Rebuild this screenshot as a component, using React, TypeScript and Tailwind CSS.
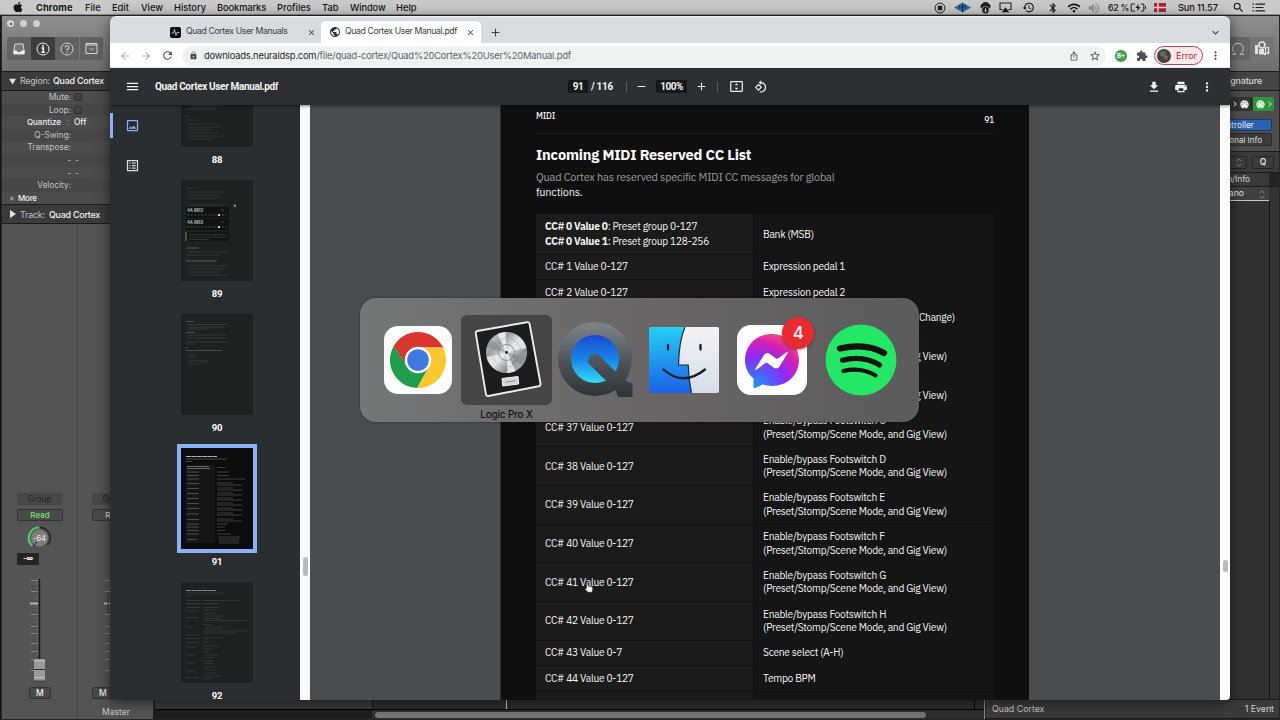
import type { ReactNode } from "react";
import { FaApple } from "react-icons/fa";
import {
  MdAdd, MdArrowBack, MdArrowForward, MdBluetooth, MdClose, MdExtension, MdFileDownload, MdHistory,
  MdIosShare, MdKeyboardArrowDown, MdLock, MdMenu, MdMoreVert, MdOutlineImage, MdOutlineListAlt,
  MdPrint, MdPublic, MdRefresh, MdRemove, MdSearch, MdStarBorder, MdVolumeUp, MdWifi,
} from "react-icons/md";

/* ---------- menu bar ---------- */

const menus = [
  { label: "Chrome", cls: "w-[49px] font-bold tracking-[0.1px]" },
  { label: "File", cls: "w-[27px]" },
  { label: "Edit", cls: "w-[29px]" },
  { label: "View", cls: "w-[33px]" },
  { label: "History", cls: "w-[43px]" },
  { label: "Bookmarks", cls: "w-[60px] tracking-[-0.1px]" },
  { label: "Profiles", cls: "w-[45px]" },
  { label: "Tab", cls: "w-[28px]" },
  { label: "Window", cls: "w-[46px] tracking-[-0.1px]" },
  { label: "Help", cls: "w-[30px]" },
];

function MenuBar() {
  return (
    <header className="flex h-[15px] shrink-0 items-center border-b border-[#8c8c8c] bg-[#c9c9c9] pt-[1px] text-[9.3px] font-medium text-[#151515]">
      <FaApple className="ml-[12px] mr-[12px] mb-[1px] size-[12px] shrink-0" />
      {menus.map((m) => (
        <span key={m.label} className={`shrink-0 whitespace-nowrap ${m.cls}`}>{m.label}</span>
      ))}
      <div className="ml-auto flex items-center">
        <svg className="mr-[8px] size-[12px]" viewBox="0 0 12 12">
          <circle cx="6" cy="6" r="5" fill="none" stroke="#222" strokeWidth="1" />
          <rect x="3.7" y="3.7" width="4.6" height="4.6" fill="#222" />
        </svg>
        <svg className="mr-[8px] h-[11px] w-[17px]" viewBox="0 0 17 11">
          <path d="M0 5.5 8.500 .5 17 5.500 8.500 10.500z" fill="#2b6da8" />
          <path d="M5.800 3v3.500M8.500 1.500v8M11.200 3v3.500M7 5h3" stroke="#12263a" strokeWidth="1" fill="none" />
        </svg>
        <svg className="mr-[7px] h-[12px] w-[13px]" viewBox="0 0 13 12">
          <path d="M3 6.500a2.400 2.400 0 0 1 0-4.500 3.800 3.200 0 0 1 7 0A2.400 2.400 0 0 1 10 6.500z" fill="#1c1c1c" />
          <circle cx="6.500" cy="8" r="3.700" fill="#1c1c1c" stroke="#c9c9c9" strokeWidth=".6" />
          <path d="M6.500 6v3.600M5 8.200l1.500 1.600L8 8.200" stroke="#c9c9c9" fill="none" strokeWidth=".9" />
        </svg>
        <svg className="mr-[10px] h-[11px] w-[13px]" viewBox="0 0 13 11">
          <path d="M3.500 7.500H1v-6.500h11v6.500H9.500" fill="none" stroke="#222" strokeWidth="1.100" />
          <path d="M6.500 5.300 10.300 10.300H2.700z" fill="#1c1c1c" />
        </svg>
        <MdHistory className="mr-[12px] size-[13px]" />
        <MdBluetooth className="mr-[8px] size-[12px]" />
        <MdWifi className="mr-[6px] size-[14px]" />
        <MdVolumeUp className="mr-[7px] size-[14px] text-[#8f8f8f]" />
        <span className="w-[22px] whitespace-nowrap text-[8.800px] tracking-[-0.3px]">62 %</span>
        <svg className="mr-[7px] h-[9px] w-[17px]" viewBox="0 0 17 9">
          <path d="M5 1H1.200v7H5M11 1h2.800v7H11" fill="none" stroke="#222" strokeWidth="1" />
          <path d="M8.800 .8 5.500 5h2.300l-.6 3.300L10.500 4H8.200z" fill="#111" />
          <path d="M15.500 3v3" stroke="#222" />
        </svg>
        <svg className="mr-[12px] h-[9px] w-[12px]" viewBox="0 0 12 9">
          <path d="M0 0h12v9H0z" fill="#b3202c" />
          <path d="M4 0v9M0 4.500h12" stroke="#e9e0e0" strokeWidth="1.400" />
        </svg>
        <span className="w-[54px] whitespace-nowrap tracking-[-0.15px]">Sun 11.57</span>
        <MdSearch className="mr-[7px] size-[13px]" />
        <svg className="mr-[15px] h-[9px] w-[13px]" viewBox="0 0 13 9">
          <path d="M3.500 1.200H13M3.500 4.500H11.500M3.500 7.800H13M.5 1.200H2M.5 4.500H2M.5 7.800H2" stroke="#1c1c1c" strokeWidth="1.200" />
        </svg>
      </div>
    </header>
  );
}

/* ---------- Logic window behind the browser ---------- */

function InspectorRow({ label, children, strong }: { label: string; children?: ReactNode; strong?: boolean }) {
  return (
    <div className="flex h-[12.6px] items-center odd:bg-[#4c4c4c] even:bg-[#474747]">
      <span className={`w-[69px] shrink-0 text-right ${strong ? "pr-[10px] text-[8px] font-medium text-[#eee]" : ""}`}>{label}</span>
      {children}
    </div>
  );
}

function Ticks({ handle }: { handle?: boolean }) {
  return (
    <svg className="h-[104px] w-[16px]" viewBox="0 0 16 104">
      <path d="M1 1.500h7M1 12.500h7M1 35.500h7M1 47.500h7M1 54.500h7M1 64.500h7M1 72.500h7M1 80.500h7M1 91.500h7" stroke="#858585" />
      <path d="M4 5h4M4 9h4M4 17h4M4 20h4M4 28h4M4 31h4M4 39h4M4 43h4M5 51h3M5 58h3M5 61h3M5 68h3M5 76h3" stroke="#676767" />
      <path d="M0 24.500h8" stroke="#b5b5b5" strokeWidth="2" />
      {handle ? (
        <>
          <path d="M9.500 0v82" stroke="#1a1a1a" strokeWidth="1.500" />
          <rect x="4" y="80" width="11" height="22" rx="1" fill="#9a9a9a" />
          <path d="M4 82h11M4 98.500h11" stroke="#c2c2c2" />
          <path d="M4 90.500h11" stroke="#333" />
          <path d="M4 102h11" stroke="#3c3c3c" />
        </>
      ) : (
        <path d="M4 14v20" stroke="#333" />
      )}
    </svg>
  );
}

function Strip() {
  return (
    <div className="flex w-[76px] shrink-0 flex-col border-r border-[#434343] pl-[15px] pt-[269px]">
      <div className="flex h-[12px] w-[45px] items-center justify-center bg-[#484848] text-[8.300px] text-[#222]">Group</div>
      <div className="mt-[4px] flex h-[12px] w-[46px] items-center justify-center rounded-[2px] border border-[#333] bg-[#494949] text-[8px] font-medium text-[#6be07d]">Read</div>
      <svg className="ml-[10px] mt-[4px] size-[26px]" viewBox="0 0 26 26">
        <circle cx="12.500" cy="13" r="8.500" fill="#7d7d7d" />
        <path d="M5.200 20.700A10.500 10.500 0 0 1 12.500 2.500" fill="none" stroke="#4fc968" strokeWidth="2.200" />
        <path d="M12.500 2.500A10.500 10.500 0 0 1 20.500 20" fill="none" stroke="#2c2c2c" strokeWidth="1.800" />
        <path d="M9.500 17 7 21" stroke="#222" />
        <text x="12.500" y="15.500" textAnchor="middle" fontSize="7.500" fill="#f1f1f1">-64</text>
      </svg>
      <div className="mt-[2px] flex h-[12px] w-[22px] items-center justify-center bg-[#242424] text-[7px] font-bold text-white">-∞</div>
      <div className="ml-[13px] mt-[14px] h-[104px]"><Ticks handle /></div>
      <div className="ml-[12px] mt-[4px] flex h-[12px] w-[22px] items-center justify-center rounded-[2px] border border-[#333] bg-[#494949] text-[8.500px] font-medium text-[#eee]">M</div>
    </div>
  );
}

function MasterStrip() {
  return (
    <div className="flex w-[76px] shrink-0 flex-col pl-[14px] pt-[269px]">
      <div className="flex h-[12px] w-[45px] items-center justify-center bg-[#484848] text-[8.300px] text-[#222]">Group</div>
      <div className="mt-[4px] flex h-[12px] w-[46px] items-center justify-center rounded-[2px] border border-[#333] bg-[#494949] text-[8px] font-medium text-[#ddd]">Read</div>
      <div className="ml-[12px] mt-[58px] h-[104px]"><Ticks /></div>
      <div className="mt-[4px] flex h-[12px] w-[22px] items-center justify-center rounded-[2px] border border-[#333] bg-[#494949] text-[8.500px] font-medium text-[#eee]">M</div>
      <div className="ml-[-14px] mt-[7px] text-center text-[8.500px] leading-[12px] text-[#c9c9c9]">Master</div>
    </div>
  );
}

function Stepper() {
  return (
    <svg className="h-[9px] w-[6px]" viewBox="0 0 6 9">
      <path d="M.7 3.200 3 .8l2.300 2.400M.7 5.800 3 8.200l2.300-2.400" fill="none" stroke="#8b8b8b" strokeWidth=".9" />
    </svg>
  );
}

function MidiPort({ tint, hole }: { tint: string; hole: string }) {
  return (
    <svg className="size-[9px]" viewBox="0 0 9 9">
      <circle cx="4.500" cy="4.500" r="4.200" fill={tint} />
      <g fill={hole}>
        <circle cx="2" cy="4.800" r=".5" /><circle cx="7" cy="4.800" r=".5" /><circle cx="2.800" cy="2.800" r=".5" />
        <circle cx="6.200" cy="2.800" r=".5" /><circle cx="4.500" cy="2" r=".5" /><path d="M3.600 7.500h1.800v1.500H3.600z" />
      </g>
    </svg>
  );
}

function Chevron() {
  return (
    <svg className="h-[6px] w-[4px]" viewBox="0 0 4 6"><path d="M.7.7 3.200 3 .7 5.300" fill="none" stroke="#f1f1f1" /></svg>
  );
}

function LogicWindow() {
  return (
    <section className="ml-[1px] flex h-[705px] flex-col border border-[#262626] bg-[#4f4f4f] text-[8.300px] text-[#c2c2c2]">
      <div className="flex h-[55px] shrink-0 justify-between bg-linear-to-b from-[#8f8f8f] to-[#6d6d6d] pl-[5px] pr-[5px]">
        <div>
          <div className="mt-[4px] flex gap-[6px]">
            <i className="flex size-[7px] items-center justify-center rounded-full bg-[#d5d5d5]"><i className="size-[2px] rounded-full bg-[#333]" /></i>
            <i className="size-[7px] rounded-full bg-[#cfcfcf]" />
            <i className="size-[7px] rounded-full bg-[#cfcfcf]" />
          </div>
          <div className="mt-[10px] flex h-[23px] w-[96px] items-center rounded-[3px] bg-[#626262] text-[#d3d3d3]">
            <div className="flex h-full w-[24px] items-center justify-center">
              <svg className="size-[14px]" viewBox="0 0 14 14"><path d="M3 2h8l1 6v4H2V8z" fill="#777" stroke="#ddd" /><path d="M1.500 8.500h3l1 1.500h3l1-1.500h3V12h-11z" fill="#eee" /></svg>
            </div>
            <div className="flex h-full w-[24px] items-center justify-center bg-[#3d3d3d]">
              <svg className="size-[14px]" viewBox="0 0 14 14"><circle cx="7" cy="7" r="6" fill="none" stroke="#f1f1f1" /><path d="M5.500 6h1.800v4M5.300 10.200h3.600M7 3v1.700" stroke="#f6f6f6" strokeWidth="1.600" fill="none" /></svg>
            </div>
            <div className="flex h-full w-[24px] items-center justify-center">
              <svg className="size-[14px]" viewBox="0 0 14 14"><circle cx="7" cy="7" r="6" fill="none" stroke="#d0d0d0" /><path d="M5.200 5.500C5.200 3.200 8.900 3.300 8.900 5.400 8.900 6.800 7 6.800 7 8.500M7 9.700v1.200" stroke="#d0d0d0" strokeWidth="1.100" fill="none" /></svg>
            </div>
            <div className="flex h-full w-[24px] items-center justify-center border-l border-[#777]">
              <svg className="size-[13px]" viewBox="0 0 13 13"><path d="M1 1.500h11v10H1zM1 3h11" fill="none" stroke="#d8d8d8" /><path d="M4.500 6.200l2 2 2-2" fill="none" stroke="#d8d8d8" /></svg>
            </div>
          </div>
        </div>
        <div className="mt-[21px] flex h-[23px] w-[60px] items-center justify-end rounded-[3px] bg-[#666] text-[#c9c9c9]">
          <svg className="mr-[5px] size-[14px]" viewBox="0 0 14 14"><path d="M1 12.300h4C2.500 10.500 1.700 8.500 1.700 6.500a5.300 5.300 0 0 1 10.600 0c0 2-.8 4-3.300 5.800h4" fill="none" stroke="#c9c9c9" /></svg>
          <div className="flex h-full w-[24px] items-center justify-center bg-[#747474]">
            <svg className="size-[16px]" viewBox="0 0 16 16"><path d="M1 4h3v9H1zM5 8h5v5.500H5z" fill="#e3e3e3" /><circle cx="8" cy="4" r="3" fill="none" stroke="#e3e3e3" strokeWidth="1.600" /><path d="M11.500 13V7l3-.5v5.500" stroke="#e3e3e3" strokeWidth="1.200" fill="none" /><circle cx="11" cy="13" r="1.300" fill="#e3e3e3" /><circle cx="14" cy="12" r="1.300" fill="#e3e3e3" /></svg>
          </div>
        </div>
      </div>

      <div className="flex min-h-0 flex-1">
        {/* inspector + channel strips */}
        <div className="flex w-[153px] shrink-0 flex-col border-r-2 border-[#222]">
          <div className="flex h-[20px] shrink-0 items-center border-y border-[#1b1b1b] bg-[#3b3b3b] pl-[7px] text-[8.900px] tracking-[-0.22px]">
            <svg className="mr-[4px] size-[7px]" viewBox="0 0 7 7"><path d="M0 .8h7L3.500 6.500z" fill="#e2e2e2" /></svg>
            <span className="w-[33px]">Region:</span><span className="whitespace-nowrap font-medium text-[#f4f4f4]">Quad Cortex</span>
          </div>
          <div>
            <InspectorRow label="Mute:"><i className="ml-[3px] size-[8px] rounded-[2px] border border-[#303030] bg-[#424242]" /></InspectorRow>
            <InspectorRow label="Loop:"><i className="ml-[3px] size-[8px] rounded-[2px] border border-[#303030] bg-[#424242]" /></InspectorRow>
            <InspectorRow label="Quantize" strong><span className="ml-[-6px] mr-[3px] scale-75"><Stepper /></span><span className="font-medium text-[#f1f1f1]">Off</span></InspectorRow>
            <InspectorRow label="Q-Swing:" />
            <InspectorRow label="Transpose:" />
            <InspectorRow label="-"><span className="ml-[4px]">-</span></InspectorRow>
            <InspectorRow label="-"><span className="ml-[4px]">-</span></InspectorRow>
            <InspectorRow label="Velocity:" />
            <div className="flex h-[12.6px] items-center bg-[#4c4c4c] pl-[8px] text-[8px] font-medium tracking-[-0.25px] text-[#f1f1f1]">
              <svg className="mr-[3px] size-[5px]" viewBox="0 0 5 5"><path d="M.5 0v5L4.500 2.500z" fill="#999" /></svg>More
            </div>
          </div>
          <div className="flex h-[20px] shrink-0 items-center border-y border-[#1b1b1b] bg-[#3b3b3b] pl-[8px] text-[8.900px] tracking-[-0.22px]">
            <svg className="mr-[4px] h-[8px] w-[6px]" viewBox="0 0 6 8"><path d="M0 0v8l6-4z" fill="#e2e2e2" /></svg>
            <span className="w-[29px]">Track:</span><span className="whitespace-nowrap font-medium text-[#f4f4f4]">Quad Cortex</span>
          </div>
          <div className="flex min-h-0 flex-1 overflow-hidden bg-[#545454]"><Strip /><MasterStrip /></div>
        </div>

        {/* arrange area: only its foot shows under the browser */}
        <div className="flex w-[830px] shrink-0 flex-col justify-end border-r border-[#8a8a8a] bg-[#2e2e2e]">
          <div className="flex h-[10px] border-b border-black">
            <div className="w-[218px] border-r border-[#111] bg-[#3a3a3a]" />
            <div className="w-[134px] border-r border-[#c9c9c9]" />
            <div className="w-[468px] border-r border-black" />
          </div>
          <div className="flex h-[9px] items-center">
            <div className="h-full w-[217px] bg-[#1f1f1f]" />
            <div className="ml-[3px] h-[6px] w-[551px] rounded-full bg-[#757575]" />
          </div>
        </div>

        {/* event list */}
        <div className="flex min-w-0 flex-1 flex-col border-l border-[#222] bg-[#333]">
          <div className="flex h-[20px] shrink-0 items-center justify-end border-y border-[#1b1b1b] bg-[#454545] pr-[17px] text-[8.800px] font-medium tracking-[-0.1px] text-[#dcdcdc]">Signature</div>
          <div className="flex h-[61px] shrink-0 flex-col items-end border-b border-[#1c1c1c] bg-[#4d4d4d] pr-[5px] pt-[6px]">
            <div className="flex h-[14px]">
              <span className="flex w-[24px] items-center justify-center gap-[3px] rounded-l-[2px] bg-[#333]"><Chevron /><MidiPort tint="#eeeeee" hole="#333333" /></span>
              <span className="flex w-[21px] items-center justify-center gap-[3px] rounded-r-[2px] bg-[#2f9440]"><MidiPort tint="#d8f5dc" hole="#2f9440" /><Chevron /></span>
            </div>
            <div className="mt-[8px] flex flex-col gap-[2px] pr-[2px]">
              <div className="flex h-[12px] w-[60px] items-center justify-end rounded-[2px] border border-[#1c3a63] bg-[#2b62ad] pr-[17px] text-[#e4ecf6]">Controller</div>
              <div className="flex h-[13px] w-[60px] items-center justify-end whitespace-nowrap rounded-[2px] border border-[#2a2a2a] bg-[#3c3c3c] pr-[9px] text-[8px] text-[#e0e0e0]">Additional Info</div>
            </div>
          </div>
          <div className="flex h-[20px] shrink-0 items-center justify-end gap-[5px] bg-[#3b3b3b] pr-[5px] pt-[1px]">
            <span className="flex h-[13px] w-[40px] items-center justify-end rounded-[2px] border border-[#242424] pr-[4px]"><Stepper /></span>
            <span className="flex h-[13px] w-[22px] items-center justify-center rounded-[2px] border border-[#242424] text-[8.500px] font-medium text-[#eee]">Q</span>
          </div>
          <div className="flex h-[15px] shrink-0 items-center border-y border-[#1c1c1c] bg-[#242424] pr-[10px]"><div className="flex h-full flex-1 items-center justify-end bg-[#3a3a3a] pr-[19px] text-[#dcdcdc]">Length/Info</div></div>
          <div className="mr-[10px] flex h-[14px] shrink-0 items-center justify-end border-b border-[#c9c9c9] bg-[#404040] pr-[4px] pt-[1px] text-[8.700px] text-[#e6e6e6]">Grand Piano<span className="ml-[15px]"><Stepper /></span></div>
          <div className="mr-[9px] flex-1 border-r border-[#151515] bg-[#313131]" />
          <div className="flex h-[20px] shrink-0 items-center justify-between border-y border-[#161616] bg-[#3a3a3a] pl-[6px] pr-[5px] text-[8.800px]">
            <span>Quad Cortex</span><span className="text-[#d5d5d5]">1 Event</span>
          </div>
        </div>
      </div>
    </section>
  );
}

/* ---------- browser chrome ---------- */

function TabStrip() {
  return (
    <div className="flex h-[27px] shrink-0 items-end rounded-t-[6px] border-t border-[#eef0f2] bg-[#d8dce0] text-[8.700px] tracking-[-0.38px] text-[#3c4043]">
      <div className="ml-[60px] flex h-[22px] w-[151px] items-center">
        <span className="flex size-[11px] shrink-0 items-center justify-center rounded-[2px] bg-[#0c0c0c]">
          <svg className="size-[9px]" viewBox="0 0 9 9"><path d="M.5 5h2l1-3.500 1.500 6 1-3H8.500" fill="none" stroke="#ddd" strokeWidth=".8" /></svg>
        </span>
        <span className="ml-[5px] flex-1 whitespace-nowrap">Quad Cortex User Manuals</span>
        <MdClose className="mr-[5px] size-[9px] shrink-0" />
      </div>
      <div className="flex h-[22px] w-[160px] items-center rounded-t-[5px] bg-white">
        <MdPublic className="ml-[8px] size-[12px] shrink-0 text-[#333]" />
        <span className="ml-[4px] flex-1 whitespace-nowrap">Quad Cortex User Manual.pdf</span>
        <MdClose className="mr-[6px] size-[9px] shrink-0" />
      </div>
      <MdAdd className="mb-[4px] ml-[8px] size-[13px]" />
      <MdKeyboardArrowDown className="mb-[4px] ml-auto mr-[8px] size-[13px]" />
    </div>
  );
}

function AddressBar() {
  return (
    <div className="flex h-[25px] shrink-0 items-center bg-white text-[#4a4d51]">
      <MdArrowBack className="ml-[9px] size-[12px] text-[#a9abae]" />
      <MdArrowForward className="ml-[9px] size-[12px] text-[#a9abae]" />
      <MdRefresh className="ml-[9px] size-[13px]" />
      <div className="ml-[8px] flex h-[20px] w-[924px] items-center rounded-full bg-[#eff2f3] pl-[7px] pr-[5px]">
        <MdLock className="size-[9px]" />
        <span className="ml-[6px] whitespace-nowrap pt-[1px] text-[9.400px] tracking-[-0.2px] text-[#5f6368]">
          <span className="text-[#26282b]">downloads.neuraldsp.com</span>/file/quad-cortex/Quad%20Cortex%20User%20Manual.pdf
        </span>
        <MdIosShare className="ml-auto size-[10px]" />
        <MdStarBorder className="ml-[10px] size-[12px]" />
      </div>
      <span className="ml-[9px] flex size-[12px] items-center justify-center rounded-full bg-[#3fa14b] text-[6px] font-bold text-white ring-2 ring-[#f1f1f1]">B+</span>
      <MdExtension className="ml-[9px] size-[12px]" />
      <div className="ml-[6px] flex h-[19px] w-[49px] items-center rounded-full border border-[#b0485a] bg-[#fbe9ea] pl-[2px] text-[9px] text-[#a8303f]">
        <svg className="mr-[5px] size-[14px]" viewBox="0 0 14 14"><circle cx="7" cy="7" r="7" fill="#3d4439" /><circle cx="6" cy="5" r="3" fill="#5f6b57" /><path d="M8 6l3 1-1 4-3-1z" fill="#a4566a" /></svg>
        Error
      </div>
      <MdMoreVert className="ml-[6px] size-[13px]" />
    </div>
  );
}

function PdfToolbar() {
  return (
    <div className="z-10 flex h-[37px] shrink-0 items-center bg-[#2c3032] font-['Roboto',sans-serif] text-[10px] font-bold text-[#f3f3f3] shadow-[0_1px_3px_rgba(0,0,0,.5)]">
      <MdMenu className="ml-[15px] size-[15px]" />
      <span className="ml-[15px] w-[413px] whitespace-nowrap text-[10px] tracking-[-0.36px]">Quad Cortex User Manual.pdf</span>
      <span className="w-[20px] bg-[#16191a] text-center leading-[13px] tracking-[-0.4px]">91</span>
      <span className="ml-[3px] w-[35px] tracking-[-0.3px]">/ 116</span>
      <i className="h-[10px] w-px bg-[#5d6062]" />
      <MdRemove className="ml-[8px] size-[13px]" />
      <span className="ml-[8px] w-[31px] bg-[#16191a] text-center leading-[13px] tracking-[-0.5px]">100%</span>
      <MdAdd className="ml-[8px] size-[13px]" />
      <i className="ml-[9px] h-[10px] w-px bg-[#5d6062]" />
      <svg className="ml-[12px] h-[11px] w-[13px]" viewBox="0 0 13 11">
        <rect x=".7" y=".7" width="11.600" height="9.600" rx=".8" fill="none" stroke="#f3f3f3" strokeWidth="1.200" />
        <path d="M6.500 2.200 8.300 4.300H4.700zM6.500 8.800 8.300 6.700H4.700z" fill="#f3f3f3" />
      </svg>
      <svg className="ml-[11px] size-[14px]" viewBox="0 0 14 14">
        <path d="M4.500 4.500 7.300 7.300 4.500 10.100 1.700 7.300z" fill="none" stroke="#f3f3f3" strokeWidth="1.100" />
        <path d="M6.500 2.600a4.700 4.700 0 1 1-.6 9.300" fill="none" stroke="#f3f3f3" strokeWidth="1.200" />
        <path d="M7.300 .2v4.800L4.700 2.600z" fill="#f3f3f3" />
      </svg>
      <MdFileDownload className="ml-auto mr-[13px] size-[14px]" />
      <MdPrint className="mr-[12px] size-[14px]" />
      <MdMoreVert className="mr-[16px] size-[14px]" />
    </div>
  );
}

/* ---------- thumbnails ---------- */

const art: Record<number, ReactNode> = {
  88: (
    <path d="M5 54h7M7 57h30M7 60h34M7 63h28M5 70h2M5 74h12M7 78h30M7 81h34M7 84h24M7 87h30M7 90h36M7 93h25" stroke="#3c4041" strokeWidth=".7" />
  ),
  89: (
    <>
      <path d="M5 8h7M7 12h36M7 15h30M7 18h32M5 22h1M7 25h35M7 72h40M5 75h34M5 79h1M7 86h40M7 89h36M7 92h32M7 95h40" stroke="#3c4041" strokeWidth=".7" />
      <path d="M5 68h13M5 81h31" stroke="#666a6b" strokeWidth=".8" />
      <path d="M5 27h43v11H5zM5 39h43v11H5z" fill="#101213" />
      <path d="M5 52h43v9H5z" fill="#141516" />
      <path d="M5 52v9" stroke="#6b5a34" strokeWidth="1.500" />
      <path d="M8 54.500h36M8 57h38M8 59.500h20" stroke="#464646" strokeWidth=".6" />
      <g fill="#9fb5a5" fontSize="4.200" fontWeight="700"><text x="6" y="32">4A MIDI</text><text x="6" y="43.500">4A MIDI</text></g>
      <path d="M6 35h40M6 47h40" stroke="#5b5b5b" strokeWidth=".8" strokeDasharray="2 1.500" />
      <path d="M37 34h2v2h-2zM37 46h2v2h-2z" fill="#bcd3dd" />
      <path d="M40 30h3M40 42h3" stroke="#7d5a42" strokeWidth=".8" />
      <path d="M53 24.500l1 2.500 1-1z" fill="#bbb" stroke="#bbb" strokeWidth=".5" />
    </>
  ),
  90: (
    <>
      <path d="M7 10.500h40M7 13h37M7 15h21M7 21h38M7 24h37M5 28h43M5 30h9M7 41h9M7 44h8M7 47h20M7 50h14" stroke="#404445" strokeWidth=".7" />
      <path d="M5 7.500h8M5 18.500h9M5 34h2M5 36.500h36" stroke="#5d6162" strokeWidth=".7" />
    </>
  ),
  91: (
    <>
      <path d="M5 17h29v78H5z" fill="#161616" />
      <path d="M5 8.500h31" stroke="#b5b5b5" strokeWidth="1.200" strokeDasharray="5 .4" />
      <path d="M5 11h41M5 13.500h6" stroke="#5f5f5f" strokeWidth=".7" />
      <path d="M6 18.500h22M6 20.500h23" stroke="#7d7d7d" strokeWidth=".8" />
      <path d="M6 24h12M6 27.500h12M6 31h12M6 35.500h12M6 40.500h12M6 45.500h12M6 50.500h12M6 55.500h12M6 60.500h12M6 66h12M6 71.500h12M6 76h12M6 79h12M6 82.500h12M6 86h12M6 91.500h10" stroke="#5c5c5c" strokeWidth=".8" />
      <path d="M36 19.500h8M36 24h12M36 27.500h12M36 31h28M36 35h16M36 37h25M36 40h16M36 42h25M36 45h16M36 47h25M36 50h16M36 52h25M36 55h16M36 57h25M36 60h16M36 62h25M36 65h16M36 67h25M36 71h16M36 73h25M36 76h11M36 79h8M36 82.500h8M36 86h14M37 89h22M38 91h20M38 93h20M38 95h20" stroke="#565656" strokeWidth=".7" />
    </>
  ),
  92: (
    <>
      <path d="M5 8.500h30" stroke="#808384" strokeWidth="1" strokeDasharray="5 .4" />
      <path d="M5 11h38M5 13.500h6M5 18.500h15M5 21.500h13M5 25.500h14M5 29h13M5 35.500h12M5 45h6M5 53h13M5 56.500h13M5 60.500h13M5 65h10M5 73h10M5 81h10M5 89h10M5 95.500h12M22 18.500h36M22 21.500h16M22 25.500h15M22 28h12M22 31.500h12M24 34h19M24 36.500h16M22 38.500h44M22 42.500h8M24 45h20M24 47h17M22 49h44M22 51h34M22 56h20M22 60.500h6M22 64h16M22 67h8M22 70h6M24 73h13M24 75.500h10M22 79h11M24 81.500h9M22 85h13M24 88h12M24 91h12M22 94h18M22 96.500h10" stroke="#3c4041" strokeWidth=".7" />
    </>
  ),
};

function Thumb({ page, active }: { page: number; active?: boolean }) {
  return (
    <figure className="flex h-[134px] shrink-0 flex-col items-center">
      <svg
        className={`h-[101px] w-[72px] shrink-0 ${active ? "bg-[#0c0c0c] outline-4 outline-[#8ab0f5]" : "bg-[#1c2122]"}`}
        viewBox="0 0 72 101"
      >
        {art[page]}
      </svg>
      <figcaption className="mt-[6px] font-['Roboto',sans-serif] text-[9.500px] font-bold leading-[14px] tracking-[-0.2px] text-white">{page}</figcaption>
    </figure>
  );
}

function Sidebar() {
  return (
    <div className="flex w-[200px] shrink-0">
      <div className="flex w-[190px] bg-[#2a2e30]">
        <div className="flex w-[45px] flex-col">
          <div className="mt-[8px] flex h-[25px] items-center border-l-[3px] border-[#8ab0f5] pl-[12px]">
            <MdOutlineImage className="size-[15px] text-[#8ab0f5]" />
          </div>
          <MdOutlineListAlt className="ml-[15px] mt-[20px] size-[15px] text-[#d9dcde]" />
        </div>
        <div className="flex w-[124px] flex-col overflow-hidden">
          <div className="-mt-[59px]">
            <Thumb page={88} />
            <Thumb page={89} />
            <Thumb page={90} />
            <Thumb page={91} active />
            <Thumb page={92} />
          </div>
        </div>
      </div>
      <div className="flex w-[10px] justify-center bg-[#fafafa] pt-[452px]">
        <i className="h-[19px] w-[5px] rounded-full bg-[#b9b9b9]" />
      </div>
    </div>
  );
}

/* ---------- document ---------- */

const footswitches = [35, 36, 37, 38, 39, 40, 41, 42].map((cc, i) => ({ cc, name: "ABCDEFGH"[i] }));

function Row({ left, right, tall }: { left: ReactNode; right: ReactNode; tall?: boolean }) {
  return (
    <div className={`flex items-center border-b border-[#121212] ${tall ? "h-[38.7px]" : "h-[25.6px]"}`}>
      <div className="flex h-full w-[218px] items-center border-r border-[#101010] bg-[#1b1b1b] pl-[9px]">{left}</div>
      <div className="flex h-full flex-1 items-center bg-[#151515] pl-[9px] leading-[13.400px]">{right}</div>
    </div>
  );
}

function Document() {
  return (
    <div className="flex min-w-0 flex-1 justify-center overflow-hidden bg-[#494d50]">
      <article className="ml-[-1px] h-[640px] w-[529px] shrink-0 border-l border-[#2b2d2e] bg-[#0f0f0f] px-[35px] font-['IBM_Plex_Sans','Roboto','Noto_Sans',sans-serif] text-[10.200px] tracking-[-0.25px] text-[#f4f4f4]">
        <div className="flex h-[29px] justify-between border-b border-[#1c1c1c] text-[8.600px] font-medium">
          <span className="mt-[5px]">MIDI</span>
          <span className="mt-[9px]">91</span>
        </div>
        <h1 className="mt-[11px] whitespace-nowrap text-[14.600px] font-bold leading-[20px] tracking-[-0.19px] text-white">Incoming MIDI Reserved CC List</h1>
        <p className="mt-[5px] whitespace-nowrap text-[10.900px] leading-[15px] tracking-[-0.18px] text-[#9d9d9d]">
          Quad Cortex has reserved specific MIDI CC messages for global
          <br />
          <span className="text-[#f4f4f4]">functions.</span>
        </p>
        <div className="mt-[14px] whitespace-nowrap">
          <div className="flex h-[40.500px] border-b border-[#121212]">
            <div className="flex w-[218px] flex-col justify-center border-r border-[#101010] bg-[#1b1b1b] pl-[9px] pt-[1px] leading-[15.300px]">
              <span><b>CC# 0 Value 0</b>: Preset group 0-127</span>
              <span><b>CC# 0 Value 1</b>: Preset group 128-256</span>
            </div>
            <div className="flex flex-1 items-center bg-[#151515] pl-[9px] pt-[1px]">Bank (MSB)</div>
          </div>
          <Row left="CC# 1 Value 0-127" right="Expression pedal 1" />
          <Row left="CC# 2 Value 0-127" right="Expression pedal 2" />
          <Row left="CC# 32 Value 0-127" right="Setlist select (applies after Program Change)" />
          {footswitches.map((f) => (
            <Row
              key={f.cc}
              tall
              left={`CC# ${f.cc} Value 0-127`}
              right={<span>Enable/bypass Footswitch {f.name}<br />(Preset/Stomp/Scene Mode, and Gig View)</span>}
            />
          ))}
          <Row left="CC# 43 Value 0-7" right="Scene select (A-H)" />
          <Row left="CC# 44 Value 0-127" right="Tempo BPM" />
          <Row left="CC# 45 Value 0-127" right="Tuner on/off" />
        </div>
      </article>
    </div>
  );
}

function BrowserWindow() {
  return (
    <section className="absolute left-[110px] top-[16px] flex h-[684px] w-[1120px] flex-col overflow-hidden rounded-t-[6px] rounded-br-[4px] shadow-[0_2px_14px_rgba(0,0,0,.55)]">
      <TabStrip />
      <AddressBar />
      <PdfToolbar />
      <div className="flex min-h-0 flex-1">
        <Sidebar />
        <Document />
        <div className="flex w-[10px] shrink-0 justify-center bg-[#fafafa] pt-[455px]">
          <i className="h-[12px] w-[5px] rounded-full bg-[#b9b9b9]" />
        </div>
      </div>
    </section>
  );
}

/* ---------- application switcher ---------- */

function ChromeIcon() {
  return (
    <svg className="h-[70px] w-[70px]" viewBox="0 0 70 70">
      <rect x="1" y="1" width="68" height="68" rx="14" fill="#fdfdfd" />
      <path d="M10.750 21A28 28 0 0 1 59.250 21L61 22.500H35L24 41.500z" fill="#d8362f" />
      <path d="M60 22.500A28 28 0 0 1 34 63L46 42 35 22.500z" fill="#fbc72f" />
      <path d="M10.750 21A28 28 0 0 0 34 63L46 41.500H24.200z" fill="#1e9e4d" />
      <circle cx="35" cy="35" r="13.200" fill="#fff" />
      <circle cx="35" cy="35" r="10.800" fill="#4078e4" />
    </svg>
  );
}

function LogicIcon() {
  return (
    <svg className="h-[78px] w-[72px]" viewBox="0 0 72 78">
      <defs>
        <linearGradient id="platter" x1="0" y1="0" x2="1" y2="1">
          <stop offset="0" stopColor="#dcdfe2" /><stop offset=".3" stopColor="#999da1" /><stop offset=".5" stopColor="#e5e7e9" />
          <stop offset=".7" stopColor="#8d9195" /><stop offset="1" stopColor="#c9cccf" />
        </linearGradient>
      </defs>
      <path d="M6.300 10 56 1.200q2.200-.4 2.600 1.800L69.500 62.500q.4 2.200-1.800 2.700L17.500 75q-2.200.4-2.600-1.800L4.800 12.500q-.3-2.100 1.500-2.500z" fill="#1b1c1e" stroke="#ececec" strokeWidth="1.900" />
      <circle cx="35.500" cy="31.500" r="20.500" fill="url(#platter)" />
      <g transform="translate(1.500 -2.500)">
        <path d="M34 34 25 15.500a20.500 20.500 0 0 1 8-2zM34 34l9 18.500a20.500 20.500 0 0 1-8 2z" fill="#f6f7f8" opacity=".8" />
        <path d="M34 34 14 29a20.500 20.500 0 0 1 4-8.500zM34 34l20 5a20.500 20.500 0 0 1-4 8.500z" fill="#7d8185" opacity=".5" />
        <path d="M34 34 50 21.500a20.500 20.500 0 0 1 4 8zM34 34 18 46.500a20.500 20.500 0 0 1-4-8z" fill="#e9ebec" opacity=".8" />
        <circle cx="34" cy="34" r="8" fill="none" stroke="#7b7f83" strokeWidth=".8" />
        <circle cx="34" cy="34" r="14.500" fill="none" stroke="#a4a8ab" strokeWidth=".5" />
        <circle cx="34" cy="34" r="1.400" fill="#111" />
      </g>
      <path d="M31 57.500 47 55.500l.7 7.500-16 2z" fill="#d3d5d7" stroke="#f1f1f1" />
      <path d="M34.500 61 44.500 59.800" stroke="#8d9092" />
    </svg>
  );
}

function QuickTimeIcon() {
  return (
    <svg className="h-[76px] w-[76px]" viewBox="0 0 76 76">
      <defs>
        <linearGradient id="ring" x1="0" y1="0" x2="0" y2="1"><stop offset="0" stopColor="#7f868d" /><stop offset=".55" stopColor="#4c5258" /><stop offset="1" stopColor="#303438" /></linearGradient>
        <linearGradient id="lens" x1="0" y1="0" x2="0" y2="1"><stop offset="0" stopColor="#1b49cf" /><stop offset=".5" stopColor="#1784e8" /><stop offset="1" stopColor="#31dcf9" /></linearGradient>
        <linearGradient id="tail" x1="0" y1="0" x2="0" y2="1"><stop offset="0" stopColor="#565d64" /><stop offset="1" stopColor="#2f3236" /></linearGradient>
      </defs>
      <circle cx="38" cy="37" r="37" fill="url(#ring)" />
      <circle cx="38" cy="37" r="24" fill="url(#lens)" />
      <path d="M31.500 37a6.500 6.500 0 0 1 9.500-4.500L67 57.500q3 2.500 8.500 3.500V75H61q-1-5.500-4-8.500L33 43q-3-3-1.500-6z" fill="url(#tail)" />
    </svg>
  );
}

function FinderIcon() {
  return (
    <svg className="h-[68px] w-[70px]" viewBox="0 0 70 68">
      <defs>
        <linearGradient id="face" x1="0" y1="0" x2="0" y2="1"><stop offset="0" stopColor="#25d0f6" /><stop offset="1" stopColor="#1b60e8" /></linearGradient>
        <linearGradient id="side" x1="0" y1="0" x2="0" y2="1"><stop offset="0" stopColor="#f3f3f5" /><stop offset="1" stopColor="#d6dde8" /></linearGradient>
      </defs>
      <rect width="70" height="66" y="1" rx="2" fill="url(#face)" />
      <path d="M36 1h32q2 0 2 2v62q0 2-2 2H42.500Q39.500 53 39.200 39H29.500Q30 15 36 1z" fill="url(#side)" />
      <path d="M36 1Q30 15 29.500 39h9.700Q39.500 53 42.500 67" fill="none" stroke="#17293d" strokeWidth="1.200" />
      <path d="M19 19v4.500M51.500 19v4.500M14.500 43.500Q34 61 56 43.500" fill="none" stroke="#14202c" strokeWidth="2.300" strokeLinecap="round" />
    </svg>
  );
}

function MessengerIcon() {
  return (
    <div className="relative">
      <svg className="h-[70px] w-[70px]" viewBox="0 0 70 70">
        <defs>
          <radialGradient id="bubble" cx=".2" cy="1" r="1.150"><stop offset="0" stopColor="#129bff" /><stop offset=".5" stopColor="#8a2cf5" /><stop offset=".75" stopColor="#d51fb4" /><stop offset="1" stopColor="#fb5c6b" /></radialGradient>
        </defs>
        <rect width="70" height="70" rx="14" fill="#fff" />
        <path d="M35 9C19.500 9 8 20.300 8 35c0 7.700 3.100 14 8.500 18.500v8.300q.3 1.900 2.300 1l6.700-3.200c3 .8 6 1.400 9.500 1.400 15.500 0 27-11.300 27-26S50.500 9 35 9z" fill="url(#bubble)" />
        <path d="M18.500 43.500 27 30q2.500-3.300 6-1l6 4.600q1 .7 2 0l8.500-6.300q2-1.200 1 1L42.500 41.500q-2.500 3.300-6 1l-6-4.500q-1-.7-2 0l-8.700 6.500q-2 1-1.300-1z" fill="#fff" />
      </svg>
      <span className="absolute -right-[7px] -top-[8px] flex size-[32px] items-center justify-center rounded-full bg-[#ea2a31] pt-[1px] text-[17px] font-medium text-white shadow-[0_1px_3px_rgba(0,0,0,.4)]">4</span>
    </div>
  );
}

function SpotifyIcon() {
  return (
    <svg className="h-[72px] w-[72px]" viewBox="0 0 72 72">
      <circle cx="36" cy="36" r="35.500" fill="#23e865" />
      <g fill="none" stroke="#10140f" strokeLinecap="round">
        <path d="M15 24.500Q41 18.500 59 29" strokeWidth="6.200" />
        <path d="M17.500 36.200Q38 31 54.500 41" strokeWidth="5.200" />
        <path d="M18.500 47Q36 43 50.500 51.500" strokeWidth="4.200" />
      </g>
    </svg>
  );
}

function Switcher() {
  return (
    <div className="absolute left-[360px] top-[298px] grid h-[124px] w-[559px] grid-cols-[88.500px_88.500px_88.500px_88.500px_89px_88px] rounded-[16px] bg-linear-to-r from-[#737778] via-[#6b6666] to-[#5b5b5c] pl-[13.750px] pt-[17px] shadow-[0_0_2px_rgba(0,0,0,.6)]">
      <div className="flex h-[90px] items-center justify-center"><ChromeIcon /></div>
      <div className="flex flex-col items-center">
        <div className="flex h-[90px] w-[91px] shrink-0 items-center justify-center rounded-[6px] bg-[#464445]"><LogicIcon /></div>
        <span className="whitespace-nowrap pt-px text-[9.800px] font-medium leading-[18px] tracking-[-0.1px] text-[#111]">Logic Pro X</span>
      </div>
      <div className="flex h-[90px] items-center justify-center"><QuickTimeIcon /></div>
      <div className="flex h-[90px] items-center justify-center"><FinderIcon /></div>
      <div className="flex h-[90px] items-center justify-center"><MessengerIcon /></div>
      <div className="flex h-[90px] items-center justify-center"><SpotifyIcon /></div>
    </div>
  );
}

function HandCursor() {
  return (
    <svg className="absolute left-[584px] top-[582px] h-[11px] w-[10px]" viewBox="0 0 10 11">
      <path d="M2.500 5V1.500q.8-1 1.500 0V4l3.500.6Q9 5 8.800 6.500L8.200 10.300H3.800L1 7.200q0-1.200 1.500-.7z" fill="#f5f5f5" stroke="#222" strokeWidth=".6" />
    </svg>
  );
}

export default function App() {
  return (
    <main className="relative h-[720px] w-[1280px] overflow-hidden bg-[#161616] font-['Inter',sans-serif]">
      <MenuBar />
      <LogicWindow />
      <BrowserWindow />
      <HandCursor />
      <Switcher />
    </main>
  );
}
